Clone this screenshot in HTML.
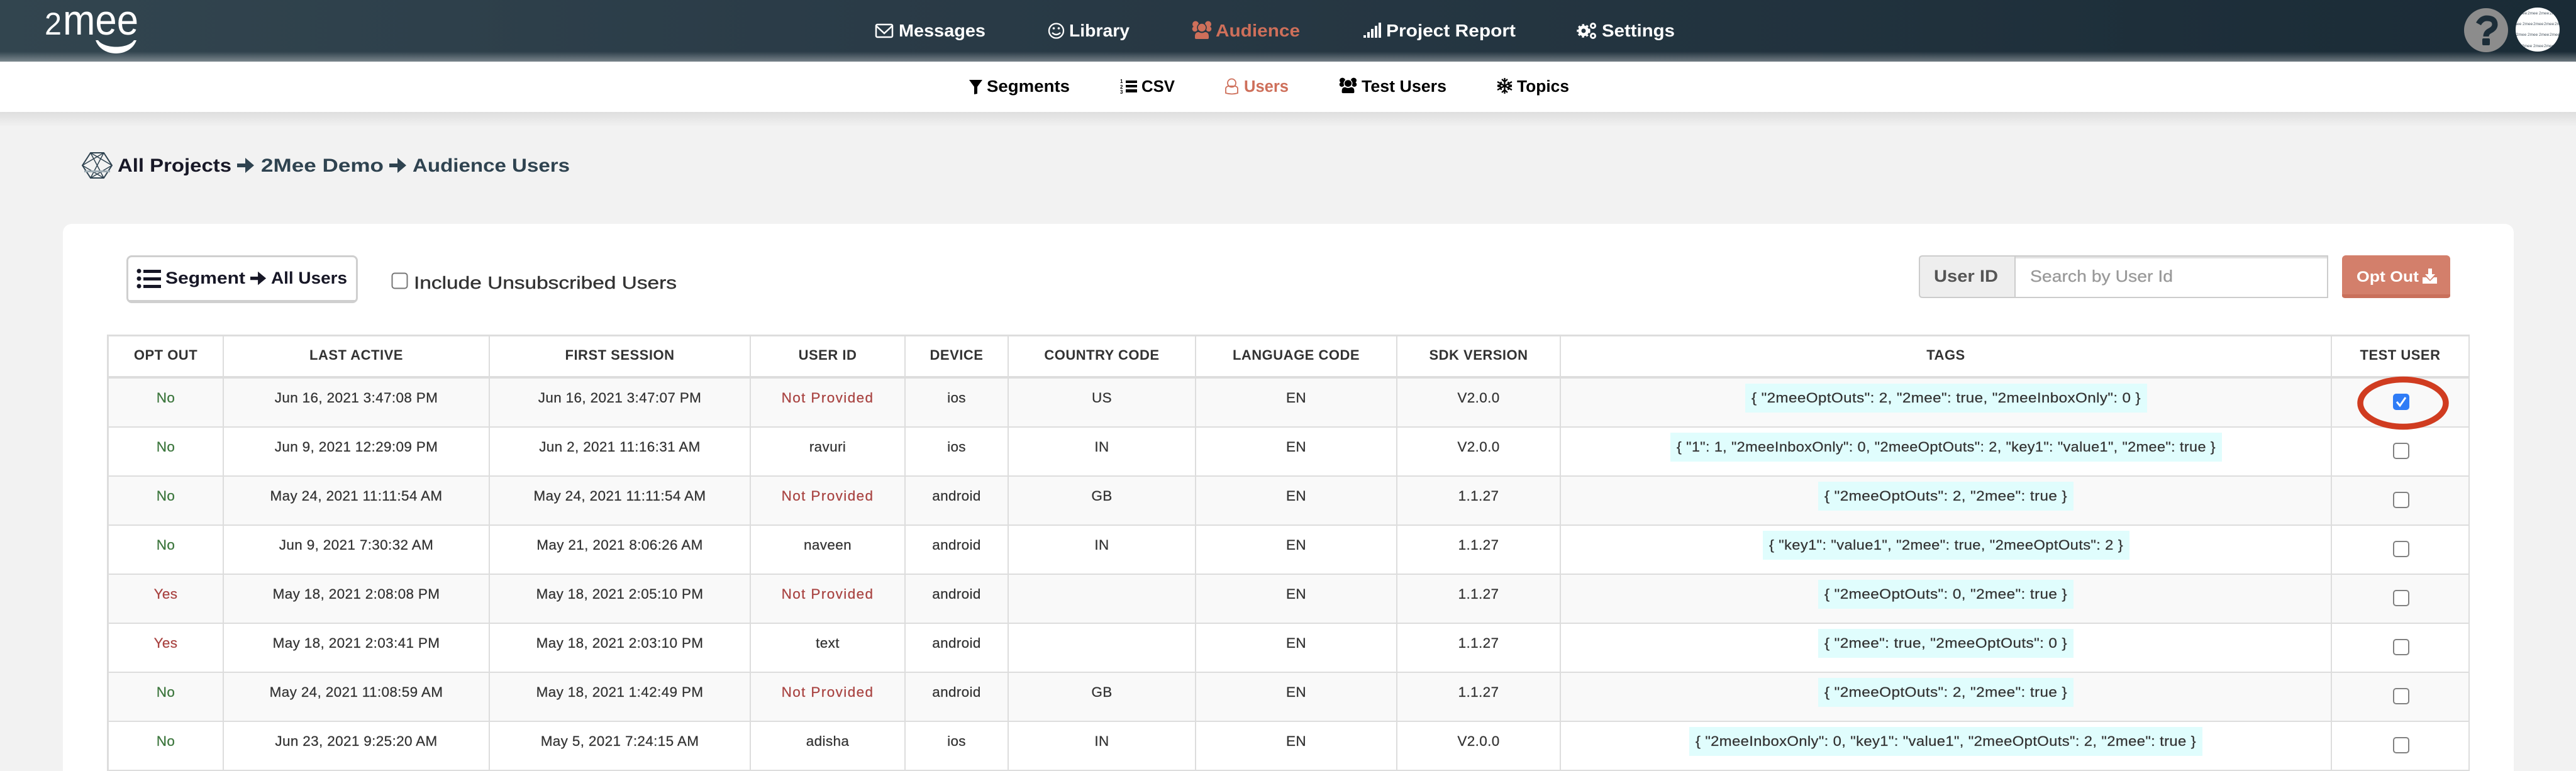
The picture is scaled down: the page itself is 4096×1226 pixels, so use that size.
<!DOCTYPE html>
<html lang="en"><head><meta charset="utf-8"><title>Audience Users</title>
<style>
*{box-sizing:border-box}
html,body{margin:0;padding:0;width:4096px;height:1226px;overflow:hidden;background:#f2f2f2;font-family:"Liberation Sans",sans-serif}
#wrap{position:relative;width:4096px;height:1226px;overflow:hidden}
#hdr{position:absolute;left:0;top:0;width:4096px;height:98px;background:linear-gradient(90deg,#32454f 0,#2a3b47 1400px,#1a2b36 100%)}
#hdrf{position:absolute;left:0;top:82px;width:4096px;height:16px;background:linear-gradient(180deg,rgba(255,255,255,0),rgba(255,255,255,.36))}
#sub{position:absolute;left:0;top:98px;width:4096px;height:80px;background:#fff}
#sh{position:absolute;left:0;top:178px;width:4096px;height:24px;background:linear-gradient(180deg,#dedede,#f2f2f2)}
#card{position:absolute;left:100px;top:356px;width:3897px;height:870px;background:#fff;border-radius:14px 14px 0 0}
#over{position:absolute;left:0;top:0;z-index:3}
table{position:absolute;left:170px;top:532px;width:3757px;table-layout:fixed;border-collapse:separate;border-spacing:0;color:#333;font-size:22.5px;letter-spacing:.35px;text-align:center;border-top:3px solid #ddd}
th{height:67px;padding:0 0 4px;border-bottom:4px solid #ddd;border-right:2px solid #ddd;font-size:22px;font-weight:bold;letter-spacing:.5px;vertical-align:middle}
td{height:78px;padding:9px 0 0;border-bottom:2px solid #ddd;border-right:2px solid #ddd;vertical-align:top;line-height:44px;-webkit-text-stroke:.25px currentColor}
td.k{padding-top:8px}
th:first-child,td:first-child{border-left:3px solid #ddd}
tr.o td{background:#f9f9f9}
.g{color:#3c763d}.r{color:#a94442}
td.r:nth-child(4){letter-spacing:1.4px}
.t{display:inline-block;height:46px;background:#e0fdfd;vertical-align:top}
.t svg{display:block}
.t text{font:22.5px "Liberation Sans",sans-serif;fill:#333;stroke:#333;stroke-width:.25px}
.c{display:block;width:26px;height:26px;margin:16px 0 0 97px;border:2px solid #808080;border-radius:5px;background:#fff}
</style></head><body>
<div id="wrap">
<div id="hdr"></div><div id="hdrf"></div><div id="sub"></div><div id="sh"></div><div id="card"></div>

<table>
<colgroup><col style="width:186px"><col style="width:423px"><col style="width:415px"><col style="width:246px"><col style="width:164px"><col style="width:298px"><col style="width:320px"><col style="width:260px"><col style="width:1226px"><col style="width:219px"></colgroup>
<thead><tr><th>OPT OUT</th><th>LAST ACTIVE</th><th>FIRST SESSION</th><th>USER ID</th><th>DEVICE</th><th>COUNTRY CODE</th><th>LANGUAGE CODE</th><th>SDK VERSION</th><th>TAGS</th><th>TEST USER</th></tr></thead>
<tbody>
<tr class="o"><td class="g">No</td><td>Jun 16, 2021 3:47:08 PM</td><td>Jun 16, 2021 3:47:07 PM</td><td class="r">Not Provided</td><td>ios</td><td>US</td><td>EN</td><td>V2.0.0</td><td class="k"><span class="t" style="width:639px"><svg width="639" height="46"><text x="10" y="30" textLength="619" lengthAdjust="spacingAndGlyphs">{ "2meeOptOuts": 2, "2mee": true, "2meeInboxOnly": 0 }</text></svg></span></td><td class="k"><span class="c" style="background:#2f7cf6;border-color:#2f7cf6"><svg width="22" height="22" style="display:block"><path d="M4 11l5 6 9-13" fill="none" stroke="#fff" stroke-width="3"/></svg></span></td></tr>
<tr><td class="g">No</td><td>Jun 9, 2021 12:29:09 PM</td><td>Jun 2, 2021 11:16:31 AM</td><td>ravuri</td><td>ios</td><td>IN</td><td>EN</td><td>V2.0.0</td><td class="k"><span class="t" style="width:877px"><svg width="877" height="46"><text x="10" y="30" textLength="857" lengthAdjust="spacingAndGlyphs">{ "1": 1, "2meeInboxOnly": 0, "2meeOptOuts": 2, "key1": "value1", "2mee": true }</text></svg></span></td><td class="k"><span class="c"></span></td></tr>
<tr class="o"><td class="g">No</td><td>May 24, 2021 11:11:54 AM</td><td>May 24, 2021 11:11:54 AM</td><td class="r">Not Provided</td><td>android</td><td>GB</td><td>EN</td><td>1.1.27</td><td class="k"><span class="t" style="width:406px"><svg width="406" height="46"><text x="10" y="30" textLength="386" lengthAdjust="spacingAndGlyphs">{ "2meeOptOuts": 2, "2mee": true }</text></svg></span></td><td class="k"><span class="c"></span></td></tr>
<tr><td class="g">No</td><td>Jun 9, 2021 7:30:32 AM</td><td>May 21, 2021 8:06:26 AM</td><td>naveen</td><td>android</td><td>IN</td><td>EN</td><td>1.1.27</td><td class="k"><span class="t" style="width:583px"><svg width="583" height="46"><text x="10" y="30" textLength="563" lengthAdjust="spacingAndGlyphs">{ "key1": "value1", "2mee": true, "2meeOptOuts": 2 }</text></svg></span></td><td class="k"><span class="c"></span></td></tr>
<tr class="o"><td class="r">Yes</td><td>May 18, 2021 2:08:08 PM</td><td>May 18, 2021 2:05:10 PM</td><td class="r">Not Provided</td><td>android</td><td></td><td>EN</td><td>1.1.27</td><td class="k"><span class="t" style="width:406px"><svg width="406" height="46"><text x="10" y="30" textLength="386" lengthAdjust="spacingAndGlyphs">{ "2meeOptOuts": 0, "2mee": true }</text></svg></span></td><td class="k"><span class="c"></span></td></tr>
<tr><td class="r">Yes</td><td>May 18, 2021 2:03:41 PM</td><td>May 18, 2021 2:03:10 PM</td><td>text</td><td>android</td><td></td><td>EN</td><td>1.1.27</td><td class="k"><span class="t" style="width:406px"><svg width="406" height="46"><text x="10" y="30" textLength="386" lengthAdjust="spacingAndGlyphs">{ "2mee": true, "2meeOptOuts": 0 }</text></svg></span></td><td class="k"><span class="c"></span></td></tr>
<tr class="o"><td class="g">No</td><td>May 24, 2021 11:08:59 AM</td><td>May 18, 2021 1:42:49 PM</td><td class="r">Not Provided</td><td>android</td><td>GB</td><td>EN</td><td>1.1.27</td><td class="k"><span class="t" style="width:406px"><svg width="406" height="46"><text x="10" y="30" textLength="386" lengthAdjust="spacingAndGlyphs">{ "2meeOptOuts": 2, "2mee": true }</text></svg></span></td><td class="k"><span class="c"></span></td></tr>
<tr><td class="g">No</td><td>Jun 23, 2021 9:25:20 AM</td><td>May 5, 2021 7:24:15 AM</td><td>adisha</td><td>ios</td><td>IN</td><td>EN</td><td>V2.0.0</td><td class="k"><span class="t" style="width:816px"><svg width="816" height="46"><text x="10" y="30" textLength="796" lengthAdjust="spacingAndGlyphs">{ "2meeInboxOnly": 0, "key1": "value1", "2meeOptOuts": 2, "2mee": true }</text></svg></span></td><td class="k"><span class="c"></span></td></tr>
</tbody></table>

<svg id="over" width="4096" height="1226" viewBox="0 0 4096 1226" font-family="'Liberation Sans',sans-serif">
<defs>
<clipPath id="av"><circle cx="4035" cy="47" r="35"/></clipPath>
<g id="arrow"><path d="M0 11h13V2l14 12-14 12v-9H0z"/></g>
<g id="people"><circle cx="5" cy="4.500" r="5" stroke="none"/><circle cx="25" cy="4.500" r="5" stroke="none"/><circle cx="4" cy="12" r="4.300" stroke="none"/><circle cx="26" cy="12" r="4.300" stroke="none"/><circle cx="15" cy="10" r="7" stroke-width="1.500"/><path d="M4 24q0-7 6-7 5 3 10 0 6 0 6 7v2q0 2-2 2H6q-2 0-2-2z" stroke="none"/></g>
</defs>

<!-- logo -->
<text x="71" y="55" font-size="50" fill="#fff" textLength="27" lengthAdjust="spacingAndGlyphs">2</text>
<text x="100" y="55" font-size="68" fill="#fff" textLength="120" lengthAdjust="spacingAndGlyphs">mee</text>
<path d="M152 64C162 92 207 92 217 64L213 64C204 78 166 78 156 64Z" fill="#fff"/>

<!-- main nav -->
<g font-size="28" font-weight="bold" fill="#fff">
<g fill="none" stroke="#fff" stroke-width="2.500"><rect x="1393" y="39" width="26" height="20" rx="2"/><path d="M1393 41l13 12 13-12"/></g>
<text x="1429" y="58" textLength="138" lengthAdjust="spacingAndGlyphs">Messages</text>
<g fill="none" stroke="#fff" stroke-width="2.300"><circle cx="1679.500" cy="49" r="11.500"/><path d="M1673 52q6.500 6 13 0"/></g><circle cx="1675.500" cy="45" r="1.800"/><circle cx="1683.500" cy="45" r="1.800"/>
<text x="1700" y="58" textLength="96" lengthAdjust="spacingAndGlyphs">Library</text>
<use href="#people" transform="translate(1896 34)" fill="#ce6f5a" stroke="#263844"/>
<text x="1933" y="58" textLength="134" lengthAdjust="spacingAndGlyphs" fill="#ce6f5a">Audience</text>
<g><rect x="2168" y="56" width="4" height="4"/><rect x="2174" y="51" width="4" height="9"/><rect x="2180" y="46" width="4" height="14"/><rect x="2186" y="41" width="4" height="19"/><rect x="2192" y="36" width="4" height="24"/></g>
<text x="2204" y="58" textLength="206" lengthAdjust="spacingAndGlyphs">Project Report</text>
<g fill="none" stroke="#fff"><circle cx="2518" cy="49" r="6" stroke-width="5"/><circle cx="2518" cy="49" r="9.500" stroke-width="2.500" stroke-dasharray="3.500 3.500"/><circle cx="2533" cy="41" r="3.500" stroke-width="3"/><circle cx="2533" cy="57" r="3.500" stroke-width="3"/></g>
<text x="2547" y="58" textLength="116" lengthAdjust="spacingAndGlyphs">Settings</text>
</g>

<!-- help and avatar -->
<circle cx="3953" cy="48" r="35" fill="#8c8c8c"/>
<path d="M3941 38Q3946 29 3954 29Q3967 29 3967 39Q3967 45 3959 49Q3953 52 3953 58" fill="none" stroke="#1c2d38" stroke-width="9"/>
<rect x="3947" y="61" width="12" height="11" rx="2" fill="#1c2d38"/>
<circle cx="4035" cy="47" r="35" fill="#fff"/>
<g clip-path="url(#av)" font-size="6.500" fill="#4a5660">
<text x="4002" y="23">2mee</text><text x="4019" y="23">2mee</text><text x="4037" y="23">2mee</text><text x="4054" y="23">2mee</text>
<text x="3993" y="40">2mee</text><text x="4011" y="40">2mee</text><text x="4028" y="40">2mee</text><text x="4045" y="40">2mee</text><text x="4062" y="40">2mee</text>
<text x="4001" y="57">2mee</text><text x="4019" y="57">2mee</text><text x="4037" y="57">2mee</text><text x="4054" y="57">2mee</text>
<text x="4010" y="75">2mee</text><text x="4028" y="75">2mee</text><text x="4045" y="75">2mee</text>
</g>

<!-- sub nav -->
<g font-size="25.500" font-weight="bold" fill="#000">
<path d="M1541 127h21l-8 11v11l-5 1v-12z"/>
<text x="1569" y="146" textLength="132" lengthAdjust="spacingAndGlyphs">Segments</text>
<g><rect x="1790" y="128" width="18" height="4"/><rect x="1790" y="135" width="18" height="4"/><rect x="1790" y="142" width="18" height="5"/></g>
<text x="1781" y="132" font-size="8">1</text><text x="1781" y="141" font-size="8">2</text><text x="1781" y="149" font-size="8">3</text>
<text x="1815" y="146" textLength="53" lengthAdjust="spacingAndGlyphs">CSV</text>
<g fill="none" stroke="#ce6f5a" stroke-width="1.800"><circle cx="1958.500" cy="132" r="6.500"/><path d="M1949 148v-7q0-3 4-4h11q4 1 4 4v7q-9 3-19 0z"/></g>
<text x="1978" y="146" textLength="71" lengthAdjust="spacingAndGlyphs" fill="#ce6f5a">Users</text>
<use href="#people" transform="translate(2130 124) scale(.9 .86)" stroke="#fff"/>
<text x="2165" y="146" textLength="135" lengthAdjust="spacingAndGlyphs">Test Users</text>
<g stroke="#000" stroke-width="2.300" fill="none"><path d="M2392.500 124v25M2381 130l23 13M2404 130l-23 13"/><path d="M2388 126l4.500 4 4.500-4M2388 147l4.500-4 4.500 4M2381 136l5-1 1-5M2404 136l-5-1-1-5M2381 137l5 1 1 5M2404 137l-5 1-1 5"/></g>
<text x="2412" y="146" textLength="83" lengthAdjust="spacingAndGlyphs">Topics</text>
</g>

<!-- breadcrumb -->
<g fill="none" stroke="#2f4350" stroke-width="1.500"><path d="M131 263l13-20h21l13 20-13 20h-21z" stroke-width="2"/><path d="M144 243l21 40M165 243l-21 40M131 263l34-20M178 263l-34 20M131 263l34 20M178 263l-34-20"/></g>
<rect x="134" y="271" width="41" height="3" fill="#9fadb5"/>
<text x="187" y="273" font-size="30" font-weight="bold" fill="#171726" textLength="181" lengthAdjust="spacingAndGlyphs">All Projects</text>
<use href="#arrow" transform="translate(377 249)" fill="#2f4350"/>
<text x="415" y="273" font-size="30" font-weight="bold" fill="#2f4350" textLength="195" lengthAdjust="spacingAndGlyphs">2Mee Demo</text>
<use href="#arrow" transform="translate(619 249)" fill="#2f4350"/>
<text x="656" y="273" font-size="30" font-weight="bold" fill="#2f4350" textLength="250" lengthAdjust="spacingAndGlyphs">Audience Users</text>

<!-- segment button -->
<rect x="202.500" y="407.500" width="365" height="73" rx="7" fill="#fff" stroke="#cfcfcf" stroke-width="3"/>
<rect x="204" y="477" width="362" height="3" fill="#cfcfcf"/>
<g fill="#171726"><circle cx="221" cy="431" r="3.500"/><circle cx="221" cy="443" r="3.500"/><circle cx="221" cy="455" r="3.500"/><rect x="228" y="429" width="28" height="5"/><rect x="228" y="441" width="28" height="5"/><rect x="228" y="453" width="28" height="5"/></g>
<text x="263" y="451" font-size="26.500" font-weight="bold" fill="#171726" textLength="127" lengthAdjust="spacingAndGlyphs">Segment</text>
<use href="#arrow" transform="translate(398 430) scale(.93 .9)" fill="#171726"/>
<text x="431" y="451" font-size="26.500" font-weight="bold" fill="#171726" textLength="121" lengthAdjust="spacingAndGlyphs">All Users</text>

<!-- include checkbox -->
<rect x="623.500" y="434.500" width="24" height="24" rx="4" fill="#fff" stroke="#767676" stroke-width="2"/>
<text x="658" y="459" font-size="28" fill="#333" stroke="#333" stroke-width=".4" textLength="418" lengthAdjust="spacingAndGlyphs">Include Unsubscribed Users</text>

<!-- input group -->
<path d="M3057 407H3204V473H3057Q3052 473 3052 468V412Q3052 407 3057 407Z" fill="#eee" stroke="#ccc" stroke-width="2"/>
<rect x="3204" y="407" width="497" height="66" fill="#fff" stroke="#ccc" stroke-width="2"/>
<rect x="3205" y="408" width="495" height="3" fill="#e2e2e2"/>
<text x="3075" y="448" font-size="27" font-weight="bold" fill="#555" textLength="102" lengthAdjust="spacingAndGlyphs">User ID</text>
<text x="3228" y="448" font-size="26" fill="#999" stroke="#999" stroke-width=".3" textLength="227" lengthAdjust="spacingAndGlyphs">Search by User Id</text>

<!-- opt out -->
<rect x="3724" y="406" width="172" height="68" rx="6" fill="#d37f6b"/>
<path d="M3724 470v-2h172v2q0 4-6 4h-160q-6 0-6-4z" fill="#c9705b"/>
<text x="3747" y="448" font-size="24.500" font-weight="bold" fill="#fff" textLength="99" lengthAdjust="spacingAndGlyphs">Opt Out</text>
<path d="M3861 427h6v9h5l-8 9-8-9h5zM3852 441h6l6 6 6-6h5v10h-23z" fill="#fff"/>

<!-- annotation -->
<ellipse cx="3821" cy="641" rx="68" ry="37.500" fill="none" stroke="#d03c20" stroke-width="9.500"/>
</svg>
</div>
</body></html>
